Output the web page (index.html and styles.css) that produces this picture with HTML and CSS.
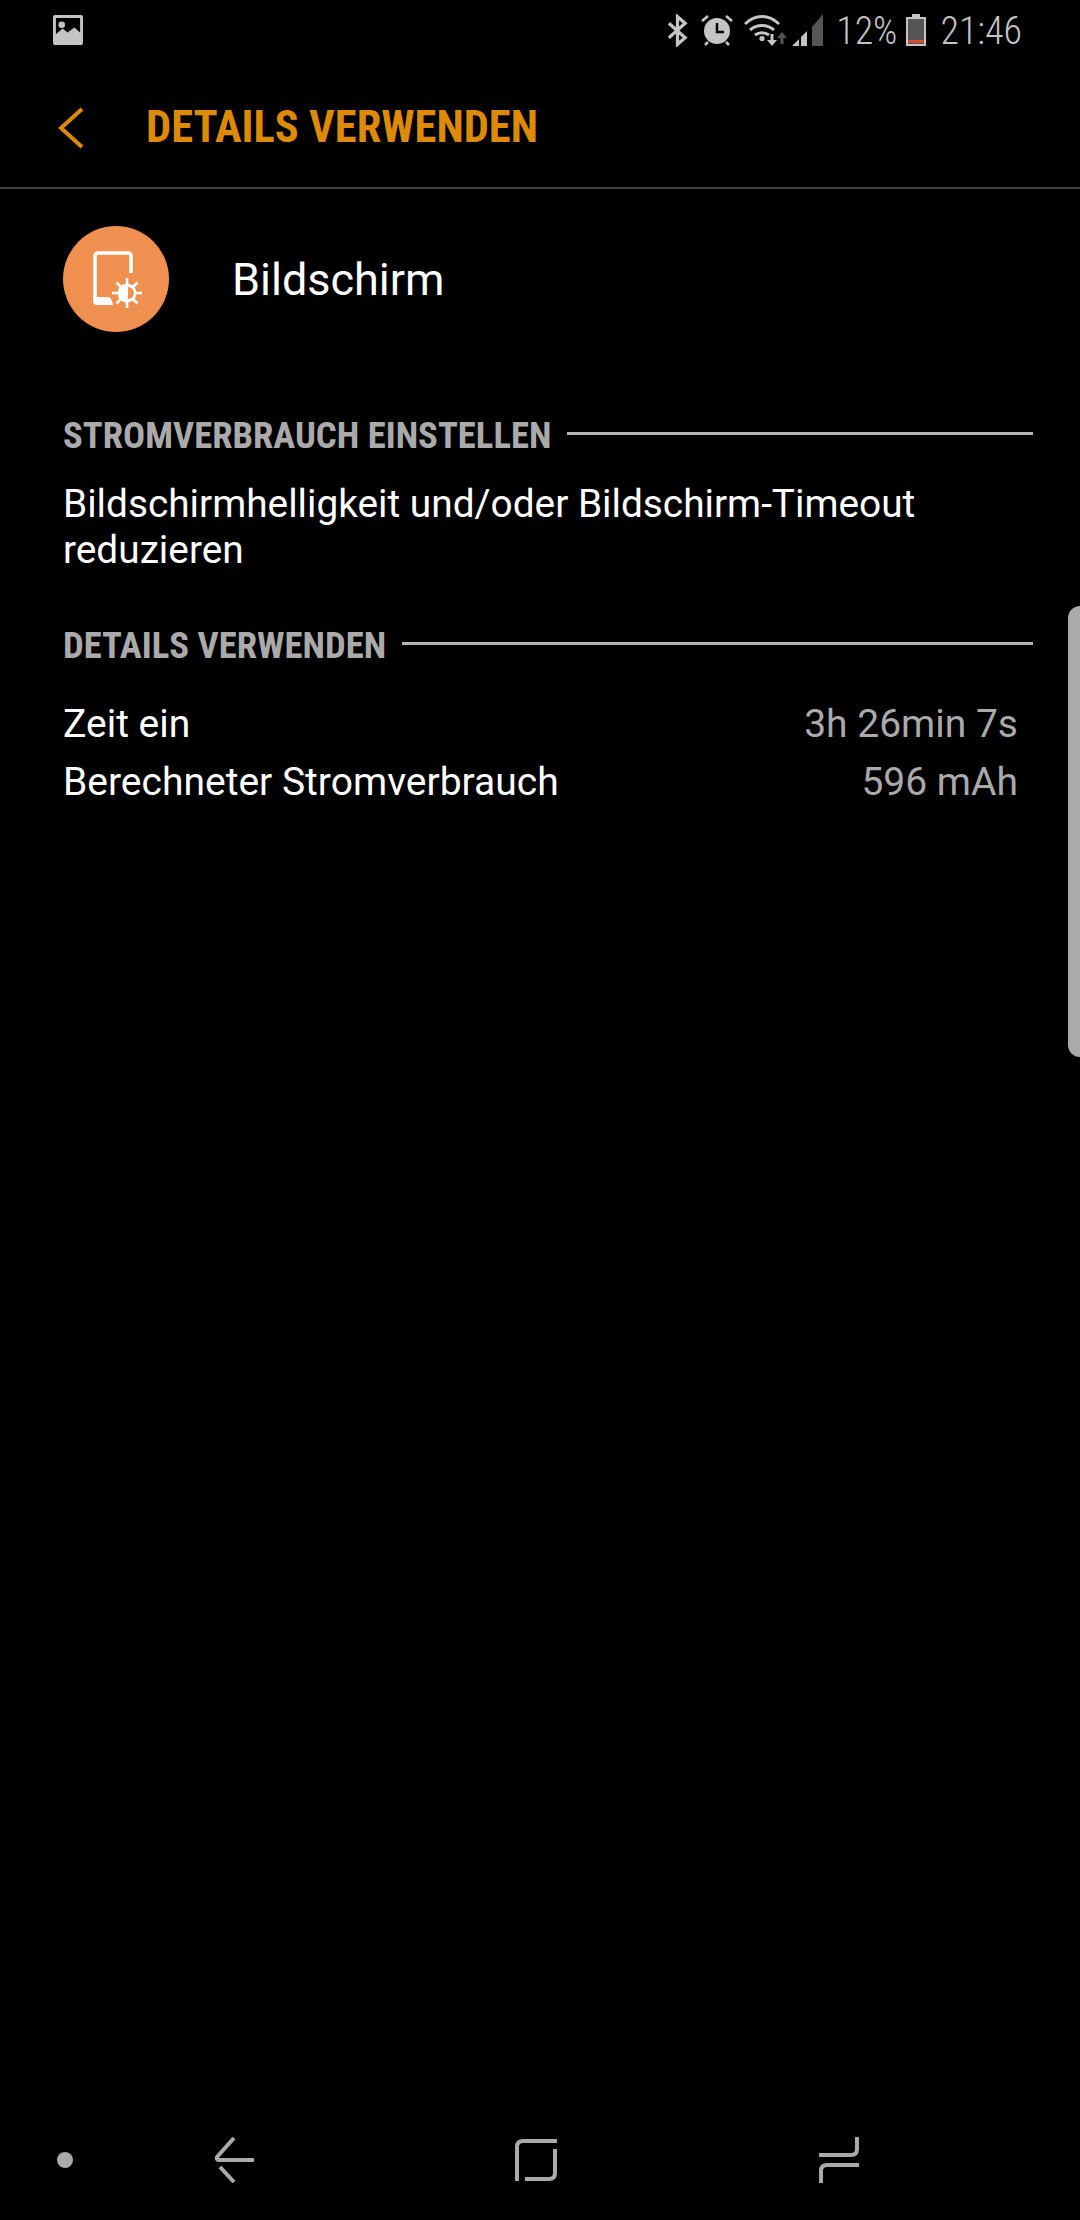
FILE: index.html
```html
<!DOCTYPE html>
<html lang="de">
<head>
  <meta charset="UTF-8">
  <meta name="viewport" content="width=device-width, initial-scale=1.0">
  <title>Details verwenden</title>
  <link rel="stylesheet" href="styles.css">
</head>
<body>
<div class="screen">
  <!-- Status bar -->
  <div class="status-bar">
    <svg class="icon-picture" width="30" height="30" viewBox="0 0 31 31">
      <path fill="#c4c4c4" fill-rule="evenodd" d="M2 0h27a2 2 0 0 1 2 2v27a2 2 0 0 1-2 2H2a2 2 0 0 1-2-2V2a2 2 0 0 1 2-2zM3 3v17l7-6 5 4 7-5 6 5V3z"/>
      <circle cx="9" cy="10" r="3.400" fill="#c4c4c4"/>
    </svg>
    <div class="status-right">
      <svg class="icon-bt" width="21" height="33" viewBox="0 0 22 33">
        <path fill="none" stroke="#c4c4c4" stroke-width="3.400" d="M2 9l17 15-8 7V2l8 7L2 24"/>
      </svg>
      <svg class="icon-alarm" width="32" height="32" viewBox="0 0 32 32">
        <circle cx="16" cy="17" r="13" fill="#c4c4c4"/>
        <path fill="none" stroke="#000" stroke-width="2.400" d="M16 9v9h7"/>
        <path fill="none" stroke="#c4c4c4" stroke-width="2.600" d="M1 7l6-5M31 7l-6-5M4 31l3-3M28 31l-3-3"/>
      </svg>
      <svg class="icon-wifi" width="43" height="31" viewBox="0 0 43 31">
        <path fill="none" stroke="#c4c4c4" stroke-width="3" d="M1 9c10-10 24-10 34 0M6 15c7-6 17-6 24 0M11 20c4-3 10-3 14 0"/>
        <circle cx="18" cy="23.500" r="2.600" fill="#c4c4c4"/>
        <path fill="#c4c4c4" d="M26.500 19h3v6h3.500l-5 6-5-6h3.500z"/>
        <path fill="#555" d="M36.500 29h3v-6h3.500l-5-6-5 6h3.500z"/>
      </svg>
      <svg class="icon-signal" width="32" height="32" viewBox="0 0 32 32">
        <path fill="#c4c4c4" d="M0 32l7-7v7zM9 32V23l6-6v15z"/>
        <path fill="#555" d="M20 32V13l11-13v32z"/>
      </svg>
      <span class="status-text battery-text">12%</span>
      <svg class="icon-battery" width="20" height="32" viewBox="0 0 20 32">
        <path fill="#555" d="M1 5h18v27H1z"/>
        <path fill="#c4c4c4" d="M6 0h8v3h6v29H0V3h6zM2 5v25h16V5z"/>
        <path fill="#d2502a" d="M2 26h16v3H2z"/>
      </svg>
      <span class="status-text clock">21:46</span>
    </div>
  </div>

  <!-- Header -->
  <div class="app-bar">
    <svg class="back-arrow" width="26" height="42" viewBox="0 0 26 42">
      <path fill="none" stroke="#dd8a06" stroke-width="4" d="M24 2L3 21l21 19"/>
    </svg>
    <h1 class="app-title">DETAILS VERWENDEN</h1>
  </div>

  <div class="content">
    <div class="usage-head">
      <div class="usage-icon">
        <svg width="56" height="60" viewBox="0 0 56 60">
          <path fill="none" stroke="#fff" stroke-width="3.600" d="M40 23V6a3 3 0 0 0-3-3H7a3 3 0 0 0-3 3v42"/>
          <path fill="#fff" d="M2 47h15c3 0 4 3 5 8H6a4 4 0 0 1-4-4z"/>
          <path fill="none" stroke="#fff" stroke-width="2.600" d="M36 28v30M21 43h30M25.500 32.500l21 21M46.500 32.500l-21 21"/>
          <circle cx="36" cy="43" r="9.500" fill="#fff"/>
          <path fill="#f09050" d="M37 37a6 6 0 0 1 0 12z"/>
        </svg>
      </div>
      <div class="usage-name">Bildschirm</div>
    </div>

    <div class="section-head section-first">
      <span class="section-label">STROMVERBRAUCH EINSTELLEN</span>
      <span class="section-line"></span>
    </div>
    <p class="hint">Bildschirmhelligkeit und/oder Bildschirm-Timeout reduzieren</p>

    <div class="section-head section-second">
      <span class="section-label">DETAILS VERWENDEN</span>
      <span class="section-line"></span>
    </div>
    <div class="detail-row">
      <span>Zeit ein</span>
      <span class="detail-value">3h 26min 7s</span>
    </div>
    <div class="detail-row">
      <span>Berechneter Stromverbrauch</span>
      <span class="detail-value">596 mAh</span>
    </div>
  </div>

  <!-- Navigation bar -->
  <div class="nav-bar">
    <span class="nav-dot"></span>
    <svg class="nav-back" width="42" height="46" viewBox="0 0 42 46">
      <path fill="none" stroke="#aaa" stroke-width="4" d="M20 1L3 20q-1 3 2 3h35M6 30l14 15"/>
    </svg>
    <svg class="nav-recent" width="44" height="44" viewBox="0 0 44 44">
      <path fill="none" stroke="#aaa" stroke-width="4" d="M2 43V9q0-6 6-6h34M40 11v24q0 6-6 6H10"/>
    </svg>
    <svg class="nav-switch" width="41" height="46" viewBox="0 0 41 46">
      <path fill="none" stroke="#aaa" stroke-width="4" d="M38 0v12q0 6-6 6H0M40 28H8q-6 0-6 6v12"/>
    </svg>
  </div>

  <!-- Edge panel handle -->
  <div class="edge-handle"></div>
</div>
</body>
</html>
```

FILE: styles.css
```css
* {
  box-sizing: border-box;
}
html, body {
  margin: 0;
  padding: 0;
  background-color: #000;
}
.screen {
  position: relative;
  display: flex;
  flex-direction: column;
  width: 1080px;
  height: 2220px;
  overflow: hidden;
  background-color: #000;
  color: #fff;
  font-family: Roboto, "Liberation Sans", sans-serif;
}
svg {
  display: block;
  flex: none;
}

/* Status bar */
.status-bar {
  display: flex;
  align-items: center;
  justify-content: space-between;
  height: 60px;
  padding: 0 58px 0 53px;
}
.status-right {
  display: flex;
  align-items: center;
}
.icon-alarm { margin-left: 13px; }
.icon-wifi { margin-left: 11px; }
.icon-signal { margin-left: 5px; }
.status-text {
  margin-top: 2px;
  color: #c4c4c4;
  font-size: 38px;
  font-weight: 350;
  font-stretch: 85%;
  line-height: 58px;
  white-space: nowrap;
}
.battery-text { margin-left: 12px; }
.icon-battery { margin-left: 9px; }
.clock { margin-left: 14px; }

/* Header */
.app-bar {
  display: flex;
  align-items: center;
  height: 129px;
  padding: 8px 0 0 58px;
  border-bottom: 2px solid #444;
}
.app-title {
  margin: 0 0 0 62px;
  color: #dd8a06;
  font-size: 44.500px;
  font-weight: 700;
  font-stretch: condensed;
  font-family: "Roboto Condensed", Roboto, sans-serif;
  line-height: 1;
}

/* Content */
.content {
  flex: 1;
  padding: 0 47px 0 63px;
}
.usage-head {
  display: flex;
  align-items: center;
  height: 106px;
  margin-top: 37px;
}
.usage-icon {
  display: flex;
  align-items: center;
  justify-content: center;
  width: 106px;
  height: 106px;
  padding: 2px 0 0 6px;
  border-radius: 50%;
  background-color: #f09050;
}
.usage-name {
  margin-left: 63px;
  font-size: 45px;
}
.section-head {
  display: flex;
  align-items: center;
  height: 40px;
}
.section-first { margin-top: 83px; }
.section-second { margin-top: 52px; }
.section-label {
  color: #aaa;
  font-size: 36.700px;
  font-weight: 700;
  font-stretch: condensed;
  font-family: "Roboto Condensed", Roboto, sans-serif;
  white-space: nowrap;
}
.section-line {
  flex: 1;
  height: 3px;
  margin: 0 0 4px 16px;
  background-color: #b4b4b4;
}
.hint {
  margin: 26px 0 0;
  font-size: 38.800px;
  line-height: 46px;
}
.detail-row {
  display: flex;
  justify-content: space-between;
  padding-right: 15px;
  font-size: 39px;
  line-height: 58px;
}
.section-second + .detail-row {
  margin-top: 30px;
}
.detail-value {
  color: #aaa;
}

/* Navigation bar */
.nav-bar {
  display: flex;
  align-items: center;
  height: 120px;
  padding-left: 57px;
}
.nav-dot {
  width: 16px;
  height: 16px;
  border-radius: 50%;
  background-color: #aaa;
}
.nav-back { margin-left: 141px; }
.nav-recent { margin-left: 259px; }
.nav-switch { margin-left: 260px; }

.edge-handle {
  position: absolute;
  top: 606px;
  right: 0;
  width: 12px;
  height: 451px;
  border-radius: 12px 0 0 12px;
  background-color: #aaa;
}
```
